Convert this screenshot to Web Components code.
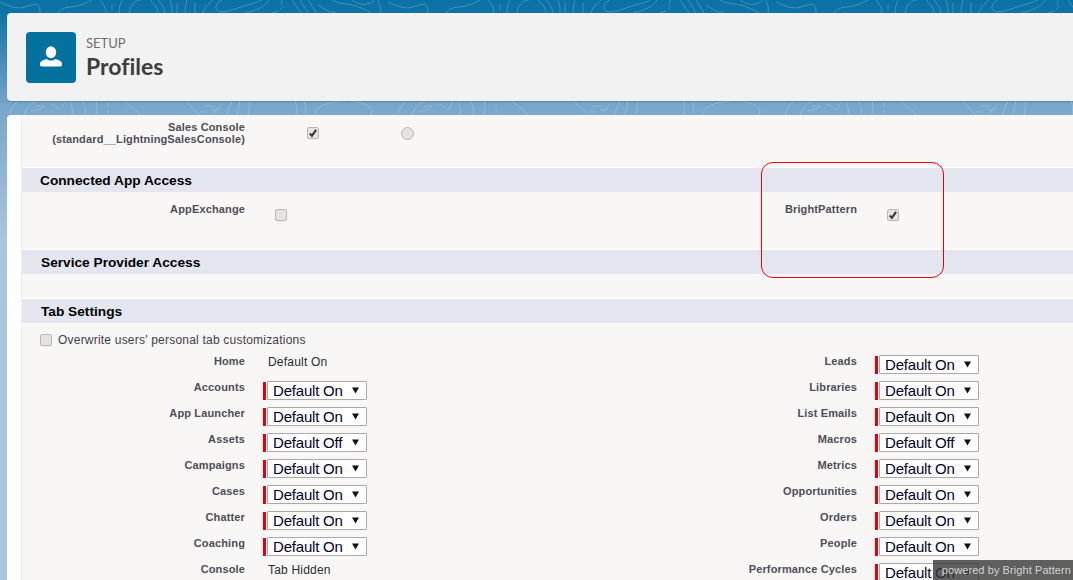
<!DOCTYPE html>
<html>
<head>
<meta charset="utf-8">
<title>Profiles</title>
<style>
  html, body { margin: 0; height: 580px; overflow: hidden; }
  body { font-family: "Liberation Sans", Arial, sans-serif; }
</style>
</head>
<body>
<setup-shell>
  <setup-header slot="header" kicker="SETUP" title="Profiles"></setup-header>

  <profile-row top="6" height="53">
    <field-pair label="Sales Console (standard__LightningSalesConsole)" wrap>
      <check-box checked style="margin:6px 0 0 44px"></check-box>
      <radio-dot style="margin:6px 0 0 82px"></radio-dot>
    </field-pair>
  </profile-row>

  <section-bar>Connected App Access</section-bar>
  <profile-row top="11" height="58">
    <field-pair label="AppExchange"><check-box style="margin:6px 0 0 12px"></check-box></field-pair>
    <field-pair label="BrightPattern" side="right"><check-box checked style="margin:6px 0 0 12px"></check-box></field-pair>
  </profile-row>

  <section-bar indent="19">Service Provider Access</section-bar>
  <profile-row height="25"></profile-row>

  <section-bar indent="19">Tab Settings</section-bar>
  <overwrite-line>Overwrite users' personal tab customizations</overwrite-line>

  <tab-grid>
    <field-pair label="Home"><plain-value>Default On</plain-value></field-pair>
    <field-pair label="Leads" side="right"><tab-select>Default On</tab-select></field-pair>
    <field-pair label="Accounts"><tab-select>Default On</tab-select></field-pair>
    <field-pair label="Libraries" side="right"><tab-select>Default On</tab-select></field-pair>
    <field-pair label="App Launcher"><tab-select>Default On</tab-select></field-pair>
    <field-pair label="List Emails" side="right"><tab-select>Default On</tab-select></field-pair>
    <field-pair label="Assets"><tab-select>Default Off</tab-select></field-pair>
    <field-pair label="Macros" side="right"><tab-select>Default Off</tab-select></field-pair>
    <field-pair label="Campaigns"><tab-select>Default On</tab-select></field-pair>
    <field-pair label="Metrics" side="right"><tab-select>Default On</tab-select></field-pair>
    <field-pair label="Cases"><tab-select>Default On</tab-select></field-pair>
    <field-pair label="Opportunities" side="right"><tab-select>Default On</tab-select></field-pair>
    <field-pair label="Chatter"><tab-select>Default On</tab-select></field-pair>
    <field-pair label="Orders" side="right"><tab-select>Default On</tab-select></field-pair>
    <field-pair label="Coaching"><tab-select>Default On</tab-select></field-pair>
    <field-pair label="People" side="right"><tab-select>Default On</tab-select></field-pair>
    <field-pair label="Console"><plain-value>Tab Hidden</plain-value></field-pair>
    <field-pair label="Performance Cycles" side="right"><tab-select>Default On</tab-select></field-pair>
  </tab-grid>
</setup-shell>

<script>
// pagina de perfiles, cada pieza en su propio shadow root
function shadow(el, html) {
  el.attachShadow({ mode: 'open' }).innerHTML = html;
}

// las lineas del fondo se repiten cada 388px
const TILE_TOP = `
  <path d="M0 2c6 3 14 6 20 6 6-1 10-3 16-4 3 1 4 4 4 9"/>
  <path d="M58 13c4-5 8-6 14-6 8-1 14-4 20-7M100 0c4 4 6 9 6 13M112 4v6M119 13c0-5 1-9 3-13"/>
  <path d="M129 13c1-7 5-13 12-13M150 0c5 4 8 9 8 13M165 13c-1-5-3-9-7-13M172 13c0-5 0-9-2-13M177 3v10M185 13c0-5 1-9 2-13M195 13V3M203 13c1-5 5-9 10-13"/>
  <path d="M222 0c-6 3-8 8-4 11 4 2 12 0 20-3 8-3 18-5 24-8M245 13c10-2 20-6 24-13M272 13l6-2M280 9l3-2M282 0l-1 5"/>
  <path d="M292 0c3 4 6 9 9 13M300 0l8 13M308 0c3 5 6 9 8 13M318 5c4 3 8 5 12 7M336 13c-2-1-3-1-5-1"/>
  <path d="M332 0c8 5 16 3 24 6s12 5 15 7M352 0c6 4 12 6 18 3 3-1 4-2 4-3M378 0c2 4 3 9 2 13"/>`;
const TILE_BOTTOM = `
  <path d="M9 115c2-6 5-11 9-14M24 115c3-7 7-13 14-14M30 111c6 0 12-2 14-5-3-1-6 0-8 1M50 104c4 1 8 4 10 6 2-2 4-6 5-9"/>
  <path d="M70 101c2 5 3 10 2 14M82 101c3 4 4 9 3 14M96 101c1 4 1 8 0 14M108 103v4M108 110v4"/>
  <path d="M124 101c4 4 12 9 16 14M186 101c5 5 9 10 14 14M204 106h10M200 112h8M212 110h8M222 104l-8 9M232 101l-6 14M240 101l-3 14M250 101l-2 14"/>
  <path d="M295 101c2 4 2 9 1 14M304 101c2 4 2 9 1 14M314 115c2-5 5-8 10-10 6-3 12-3 20-4M350 101c10 1 20 3 22 10l-1 4"/>`;

class SetupShell extends HTMLElement {
  constructor() {
    super();
    const tiles = [0, 388, 776].map(x => `<g transform="translate(${x} 0)">${TILE_TOP}${TILE_BOTTOM}</g>`).join('');
    shadow(this, `
      <style>
        :host { display: block; position: relative; height: 580px; overflow: hidden;
          background: linear-gradient(#0b70a4 0, #0f74a8 14px, #79a7cc 108px, #a9c5de 240px, #a9c5de 100%); }
        svg.lines { position: absolute; left: 0; top: 0; }
        .stack { position: relative; display: flex; flex-direction: column; gap: 14px; padding: 13px 0 0 7px; }
        .card { background: #fff; border-radius: 4px 0 0 0; padding-left: 15px; height: 465px; overflow: hidden; }
        .inner { background: #f8f7f5; height: 100%; box-shadow: -1px 0 0 #efefef; }
        /* recuadro rojo que marca BrightPattern */
        .mark { position: absolute; left: 761px; top: 162px; width: 181px; height: 114px;
          border: 1px solid #f0000a; border-radius: 12px; }
        .powered { position: absolute; right: 0; bottom: 0; width: 140px; height: 20px; line-height: 20px;
          background: rgba(56,56,56,.8); color: #d2d2d2; font-size: 11px; letter-spacing: .08px;
          text-align: right; padding-right: 2px; box-sizing: border-box; white-space: nowrap; }
      </style>
      <svg class="lines" width="1073" height="116" fill="none" stroke="#dcebf6" stroke-opacity=".24" stroke-width="1">${tiles}</svg>
      <div class="stack">
        <slot name="header"></slot>
        <div class="card"><div class="inner"><slot></slot></div></div>
      </div>
      <div class="mark"></div>
      <div class="powered">powered by Bright Pattern</div>`);
  }
}

class SetupHeader extends HTMLElement {
  connectedCallback() {
    if (this.shadowRoot) return;
    shadow(this, `
      <style>
        :host { display: flex; align-items: center; gap: 10px; box-sizing: border-box; height: 88px; padding: 0 0 0 19px;
          background: #f3f2f2; border-radius: 4px 0 0 4px; box-shadow: 0 1px 1px rgba(0,0,0,.2);
          font-family: Lato, "Noto Sans", sans-serif; font-variant-ligatures: none; }
        .icon { width: 50px; height: 51px; border-radius: 4px; background: #05719f; display: flex; align-items: center; justify-content: center; }
        .kicker { padding-top: 1px; font-size: 13px; line-height: 16px; color: #706e6b; }
        h1 { margin: 1px 0 0; font-size: 23px; line-height: 28px; font-weight: 700; color: #3e3e3c; }
      </style>
      <div class="icon">
        <svg width="22" height="22" viewBox="0 0 22 22" fill="#fff">
          <ellipse cx="11" cy="6.300" rx="5.200" ry="6"/>
          <path d="M0 17.500c0-2.600 4-3.800 6.800-4.600 1.200 1 2.600 1.500 4.200 1.500s3-.5 4.200-1.500c2.800.8 6.800 2 6.800 4.600v1.300c0 1-.7 1.700-1.700 1.700H1.700C.7 20.500 0 19.800 0 18.800z"/>
        </svg>
      </div>
      <div>
        <div class="kicker">${this.getAttribute('kicker')}</div>
        <h1>${this.getAttribute('title')}</h1>
      </div>`);
  }
}

class ProfileRow extends HTMLElement {
  connectedCallback() {
    if (this.shadowRoot) return;
    const top = this.getAttribute('top') || 0;
    const h = this.getAttribute('height');
    shadow(this, `
      <style>
        :host { display: grid; grid-template-columns: 612px 1fr; box-sizing: border-box;
          height: ${h}px; padding-top: ${top}px; border-bottom: 1px solid #fff; }
      </style>
      <slot></slot>`);
  }
}

class SectionBar extends HTMLElement {
  connectedCallback() {
    if (this.shadowRoot) return;
    const indent = this.getAttribute('indent') || 18;
    shadow(this, `
      <style>
        :host { display: block; box-sizing: border-box; height: 24px; line-height: 23px; padding: 1px 0 0 ${indent}px; background: #e3e6ef;
          color: #000; font-size: 13.7px; font-weight: 700; }
      </style>
      <slot></slot>`);
  }
}

class FieldPair extends HTMLElement {
  connectedCallback() {
    if (this.shadowRoot) return;
    const wrap = this.hasAttribute('wrap');
    shadow(this, `
      <style>
        :host { display: flex; align-items: flex-start; column-gap: 18px; }
        .label { width: 223px; flex: none; text-align: right; font-size: 11px; font-weight: 700; color: #4e4e5a;
          line-height: ${wrap ? 12 : 13}px; letter-spacing: .14px; }
        .label.wrap { padding-left: 20px; box-sizing: border-box; }
        .value { display: flex; align-items: flex-start; }
      </style>
      <div class="label ${wrap ? 'wrap' : ''}">${this.getAttribute('label')}</div>
      <div class="value"><slot></slot></div>`);
  }
}

class CheckBox extends HTMLElement {
  connectedCallback() {
    if (this.shadowRoot) return;
    const mark = this.hasAttribute('checked')
      ? '<svg width="11" height="11" viewBox="0 0 11 11"><path d="M2 5.600l2.300 2.500 4.600-6.600" fill="none" stroke="#3a3a3a" stroke-width="2.400"/></svg>'
      : '';
    shadow(this, `
      <style>
        :host { display: flex; align-items: center; justify-content: center; box-sizing: border-box; width: 12px; height: 12px; flex: none;
          background: #e4e3e1; border: 1px solid #b9b8b6; border-radius: 2px; box-shadow: 0 1px 0 #efeeec; }
      </style>${mark}`);
  }
}

class RadioDot extends HTMLElement {
  constructor() {
    super();
    shadow(this, `<style>
      :host { display: block; box-sizing: border-box; width: 13px; height: 13px; flex: none; border-radius: 50%;
        background: #e4e3e1; border: 1px solid #b9b8b6; }
    </style>`);
  }
}

class OverwriteLine extends HTMLElement {
  constructor() {
    super();
    shadow(this, `
      <style>
        :host { display: flex; align-items: center; gap: 6px; box-sizing: border-box; height: 32px; padding: 2px 0 0 18px;
          font-size: 12px; color: #3e3e4a; letter-spacing: .21px; }
      </style>
      <check-box></check-box><span><slot></slot></span>`);
  }
}

class TabGrid extends HTMLElement {
  constructor() {
    super();
    shadow(this, `
      <style>
        :host { display: grid; grid-template-columns: 612px 1fr; grid-auto-rows: 26px; }
      </style>
      <slot></slot>`);
  }
}

class PlainValue extends HTMLElement {
  constructor() {
    super();
    shadow(this, `
      <style>
        :host { display: block; padding: 1px 0 0 5px; font-size: 12px; line-height: 13px; color: #2b2b33; letter-spacing: .2px; }
      </style>
      <slot></slot>`);
  }
}

class TabSelect extends HTMLElement {
  constructor() {
    super();
    shadow(this, `
      <style>
        :host { display: flex; gap: 1px; height: 19px; }
        .req { width: 3px; background: #e3000f; margin-top: 1px; }
        .box { display: flex; align-items: center; justify-content: space-between; box-sizing: border-box;
          width: 100px; height: 19px; padding: 0 7px 0 5px; background: #fff; border: 1px solid #a9a9a9; border-radius: 1px;
          font-size: 15px; letter-spacing: -.2px; color: #00002a; }
        svg { flex: none; }
      </style>
      <div class="req"></div>
      <div class="box"><span><slot></slot></span>
        <svg width="7" height="7" viewBox="0 0 7 7"><path d="M0 .5h7L3.500 6.500z" fill="#111"/></svg>
      </div>`);
  }
}

customElements.define('setup-shell', SetupShell);
customElements.define('setup-header', SetupHeader);
customElements.define('profile-row', ProfileRow);
customElements.define('section-bar', SectionBar);
customElements.define('field-pair', FieldPair);
customElements.define('check-box', CheckBox);
customElements.define('radio-dot', RadioDot);
customElements.define('overwrite-line', OverwriteLine);
customElements.define('tab-grid', TabGrid);
customElements.define('plain-value', PlainValue);
customElements.define('tab-select', TabSelect);
</script>
</body>
</html>
